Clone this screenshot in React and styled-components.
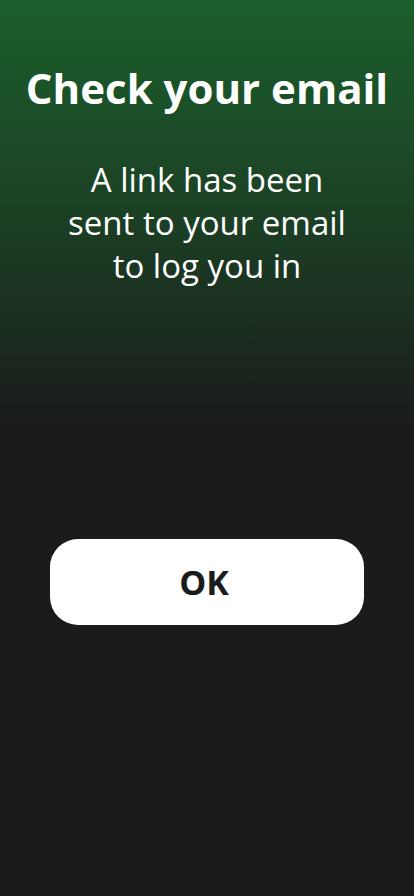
import React from "react"
import styled, { createGlobalStyle } from "styled-components"

const GlobalStyle = createGlobalStyle`
    html, body {
        margin: 0;
        padding: 0;
        background: #1b1b1b;
    }
    * {
        box-sizing: border-box;
    }
`

const Screen = styled.div`
    width: 414px;
    height: 896px;
    display: flex;
    flex-direction: column;
    align-items: center;
    padding-top: 61px;
    background: linear-gradient(180deg, #1b5f2b 0%, #1b4325 22%, #1b1b1b 48%, #1b1b1b 100%);
    font-family: 'Open Sans', 'Noto Sans', sans-serif;
    color: white;
`

const Title = styled.h1`
    margin: 0;
    font-size: 42px;
    font-weight: 700;
    line-height: 54px;
    text-align: center;
    white-space: nowrap;
`

const Message = styled.p`
    margin: 43px 0 0 0;
    font-size: 33px;
    font-weight: 400;
    line-height: 43px;
    text-align: center;
`

const OkButton = styled.button`
    margin-top: 252px;
    width: 314px;
    height: 86px;
    padding: 0 6px 0 0;
    border: none;
    border-radius: 28px;
    background: white;
    color: #1b1b1b;
    font-family: inherit;
    font-size: 34px;
    font-weight: 700;
    cursor: pointer;
`

export default function App() {
    return (
        <>
            <GlobalStyle />
            <Screen>
                <Title>Check your email</Title>
                <Message>
                    A link has been<br />
                    sent to your email<br />
                    to log you in
                </Message>
                <OkButton>OK</OkButton>
            </Screen>
        </>
    )
}
